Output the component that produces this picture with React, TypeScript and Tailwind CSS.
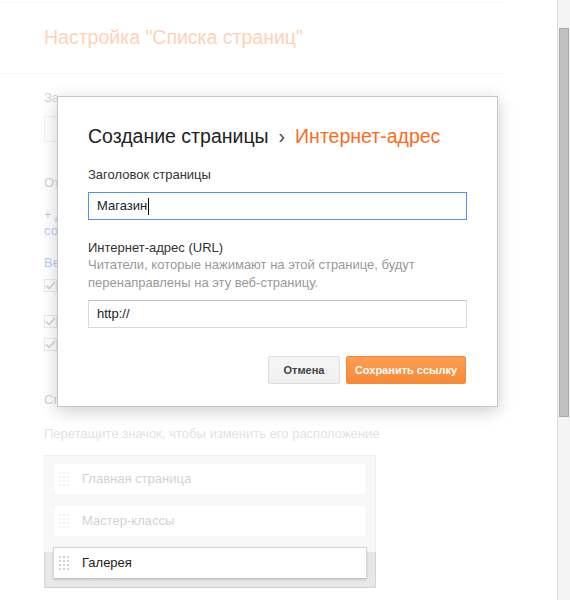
import React from "react";

const DragHandle: React.FC = () => (
  <svg width="10" height="14" viewBox="0 0 10 14" className="shrink-0">
    {[0, 4, 8].map((x) =>
      [0, 4, 8, 12].map((y) => (
        <rect key={`${x}-${y}`} x={x} y={y} width="2" height="2" fill="#cfcfcf" />
      ))
    )}
  </svg>
);

const CheckBox: React.FC = () => (
  <div className="w-[13px] h-[13px] border border-[#b5b5b5] bg-white flex items-center justify-center shrink-0">
    <svg width="11" height="9" viewBox="0 0 11 9">
      <path d="M1 4.5 L4 7.5 L10 1" fill="none" stroke="#777" strokeWidth="1.8" />
    </svg>
  </div>
);

const pages = ["Главная страница", "Мастер-классы"];

const App: React.FC = () => {
  return (
    <div className="relative w-[570px] h-[600px] overflow-hidden bg-white font-['Liberation_Sans',Arial,sans-serif] text-[13px]">
      <div className="flex h-full">
        {/* Page behind the dialog */}
        <main className="w-[557px]">
          <div className="h-[3px] w-[505px] border-b border-[#e5e5e5]" />
          <header className="h-[71px] w-[505px] border-b border-[#e5e5e5] px-[44px] flex items-center">
            <h1 className="text-[19.5px] leading-[24px] text-[#ff6600] mt-[-2px]">Настройка "Списка страниц"</h1>
          </header>

          <div className="pl-[44px]">
            {/* settings column, mostly hidden behind the dialog */}
            <div className="w-[13px] overflow-hidden whitespace-nowrap">
              <p className="mt-[16px] leading-[16px] text-[#666]">Заголовок</p>
              <div className="mt-[10px] w-[300px] h-[26px] border border-[#ccc] px-[12px] leading-[24px] text-[#333]">
                Страницы
              </div>

              <p className="mt-[33px] leading-[16px] text-[#666]">Отображаемые страницы</p>
              <p className="mt-[16px] leading-[16px] text-[#15c]">
                + Добавить внешнюю ссылку
                <br />
                создать страницу
              </p>
              <p className="mt-[16px] leading-[16px] text-[#15c]">Веб-адрес</p>

              <div className="mt-[8px] flex flex-col">
                <div className="flex gap-[8px] items-start h-[36px]">
                  <CheckBox />
                  <span className="leading-[16px] text-[#333]">Главная страница</span>
                </div>
                <div className="flex gap-[8px] items-start h-[23px]">
                  <CheckBox />
                  <span className="leading-[16px] text-[#333]">Мастер-классы</span>
                </div>
                <div className="flex gap-[8px] items-start h-[23px]">
                  <CheckBox />
                  <span className="leading-[16px] text-[#333]">Галерея</span>
                </div>
              </div>

              <p className="mt-[31px] leading-[16px] text-[#666]">Список страниц</p>
            </div>

            <p className="mt-[18px] leading-[16px] text-[#999]">
              Перетащите значок, чтобы изменить его расположение
            </p>

            <div className="mt-[13px] w-[332px] border border-[#d4d4d4] bg-[#e8e8e8] pt-[7px] pb-[8px] px-[8px] flex flex-col gap-[10px]">
              {pages.map((p) => (
                <div
                  key={p}
                  className="h-[32px] bg-white border border-[#e0e0e0] flex items-center pl-[5px] gap-[13px] text-[#666]"
                >
                  <DragHandle />
                  <span>{p}</span>
                </div>
              ))}
              {/* Dragged item sits above the overlay */}
              <div className="relative z-20 h-[32px] bg-white border border-[#d6d6d6] border-b-[#c4c4c4] shadow-[0_1px_2px_rgba(0,0,0,0.12)] flex items-center pl-[5px] gap-[13px] text-[#222]">
                <DragHandle />
                <span>Галерея</span>
              </div>
            </div>
          </div>
        </main>

        {/* Scrollbar */}
        <div className="w-[13px] h-full bg-[#f4f4f4] border-l border-[#dcdcdc] flex flex-col items-center">
          <div className="mt-[28px] w-[10px] h-[389px] bg-[#c1c1c1] border border-[#a9a9a9]" />
        </div>
      </div>

      {/* Modal overlay */}
      <div className="absolute top-0 left-0 w-[557px] h-[552px] bg-white/70 z-10" />

      {/* Dialog */}
      <div className="absolute z-30 left-[57px] top-[96px] w-[441px] bg-white border border-[#c6c6c6] shadow-[0_4px_16px_rgba(0,0,0,0.2)] px-[30px] pt-[27px] pb-[22px]">
        <h2 className="text-[19.5px] leading-[24px] text-[#222] whitespace-nowrap">
          Создание страницы
          <span className="mx-[10px] text-[#444]">›</span>
          <span className="text-[#ff6a1a]">Интернет-адрес</span>
        </h2>

        <p className="mt-[19px] leading-[16px] text-[#333]">Заголовок страницы</p>
        <div className="mt-[9px] h-[28px] border border-[#4d90fe] flex items-center px-[8px] text-[#222]">
          Магазин
          <span className="ml-px w-px h-[17px] bg-black" />
        </div>

        <p className="mt-[20px] leading-[16px] text-[#333]">Интернет-адрес (URL)</p>
        <p className="leading-[18px] text-[#999]">
          Читатели, которые нажимают на этой странице, будут
          <br />
          перенаправлены на эту веб-страницу.
        </p>
        <div className="mt-[8px] h-[28px] border border-[#d9d9d9] border-t-[#c0c0c0] flex items-center px-[8px] text-[#222]">
          http://
        </div>

        <div className="mt-[28px] flex justify-end gap-[6px] pr-px">
          <button className="w-[72px] h-[28px] rounded-[2px] border border-[#dcdcdc] bg-gradient-to-b from-[#f6f6f6] to-[#f0f0f0] text-[11px] font-bold text-[#444]">
            Отмена
          </button>
          <button className="w-[120px] h-[28px] rounded-[2px] border border-[#f48a3a] bg-gradient-to-b from-[#fd9d52] to-[#f68a35] text-[11px] font-bold text-white">
            Сохранить ссылку
          </button>
        </div>
      </div>
    </div>
  );
};

export default App;
